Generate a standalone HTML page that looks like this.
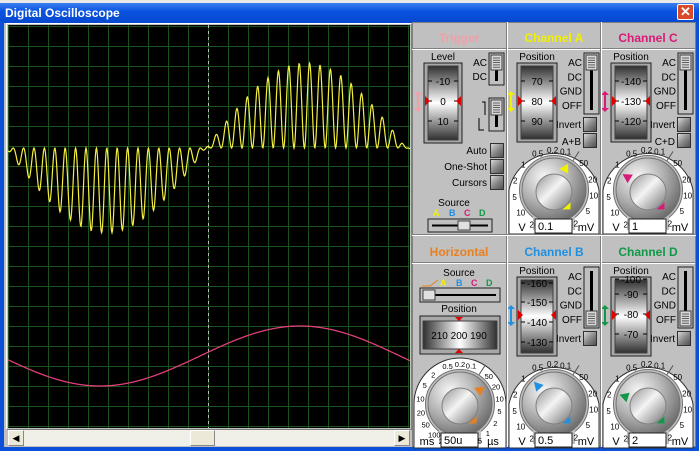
<!DOCTYPE html>
<html><head><meta charset="utf-8"><style>
*{margin:0;padding:0;box-sizing:border-box}
body{width:699px;height:451px;overflow:hidden;background:#c0c0c0;font-family:"Liberation Sans",Arial,sans-serif;position:relative}
.a{position:absolute}
.ttl{position:absolute;font-size:12px;font-weight:bold;text-align:center;width:94px;left:0;top:9px}
.btn{position:absolute;width:14px;height:15px;border:1px solid #303030;background:linear-gradient(135deg,#d8d8d8,#8a8a8a 50%,#505050)}
.col{position:absolute;width:94px;height:212px}
</style></head><body>
<div class="a" style="left:0;top:0;width:699px;height:3px;background:#e8e8e8"></div>
<div class="a" style="left:0;top:3px;width:699px;height:20px;background:linear-gradient(#3a80f0,#0a54e0 40%,#0848d0)"></div>
<div class="a" style="left:5px;top:6px;color:#fff;font-weight:bold;font-size:12px">Digital Oscilloscope</div>
<div class="a" style="left:677px;top:4px;width:17px;height:16px;background:#d84a2a;border:1px solid #fff;border-radius:2px;color:#fff;font-size:13px;font-weight:bold;text-align:center;line-height:14px">✕</div>
<div class="a" style="left:0;top:22px;width:4px;height:429px;background:#0a50d8"></div>
<div class="a" style="left:696px;top:22px;width:3px;height:429px;background:#0a50d8"></div>
<div class="a" style="left:0;top:447px;width:699px;height:4px;background:#0a50d8"></div>
<div class="a" style="left:6px;top:23px;width:406px;height:407px;border:1px solid #fff;border-right-color:#808080;border-bottom-color:#808080"></div>
<svg class="a" style="left:8px;top:25px" width="402" height="403" id="scr"></svg>
<div class="a" style="left:8px;top:430px;width:402px;height:16px;background:#f0efe8"></div>
<div class="a" style="left:8px;top:430px;width:16px;height:16px;background:#ece9d8;border:1px solid #fff;border-right-color:#888;border-bottom-color:#888;font-size:9px;text-align:center;line-height:14px">◀</div>
<div class="a" style="left:394px;top:430px;width:16px;height:16px;background:#ece9d8;border:1px solid #fff;border-right-color:#888;border-bottom-color:#888;font-size:9px;text-align:center;line-height:14px">▶</div>
<div class="a" style="left:190px;top:430px;width:25px;height:16px;background:#ece9d8;border:1px solid #fff;border-right-color:#888;border-bottom-color:#888"></div>
<div class="a" style="left:412px;top:22px;width:284px;height:425px;background:#c0c0c0;border:1px solid #808080"></div>
<div id="cols"></div>
<script>
(function(){
var s='<rect width="402" height="403" fill="#000"/>';
for(var i=0;i<=20;i++){var x=i*20+0.5;s+='<line x1="'+x+'" y1="0" x2="'+x+'" y2="403" stroke="#1c521c"/>';}
for(var j=0;j<=20;j++){var y=j*20+1.5;s+='<line x1="0" y1="'+y+'" x2="402" y2="'+y+'" stroke="#1c521c"/>';}
s+='<line x1="200.5" y1="0" x2="200.5" y2="403" stroke="#bbb" stroke-dasharray="3,3"/>';
var p='',q='';
for(var x=0;x<=402;x+=0.5){var X=x+8;var sv=Math.sin(2*Math.PI*(X-206)/400);var f=Math.cos(2*Math.PI*(X-8)/10.4);
var y=148-85*sv*(0.5+0.5*f)-25;p+=(x?'L':'M')+x+' '+y.toFixed(1);
var y2=356-30*Math.sin(2*Math.PI*(X-200)/400)-25;q+=(x?'L':'M')+x+' '+y2.toFixed(1);}
s+='<path d="'+q+'" fill="none" stroke="#e0407a" stroke-width="1.3"/>';
s+='<path d="'+p+'" fill="none" stroke="#f4f040" stroke-width="1.2"/>';
document.getElementById('scr').innerHTML=s;
})();
function tri(x,y,dir,c,sz){sz=sz||5;var pts;
if(dir=='r')pts=[x,y-sz,x+sz,y,x,y+sz];else if(dir=='l')pts=[x,y-sz,x-sz,y,x,y+sz];else if(dir=='d')pts=[x-sz,y,x+sz,y,x,y+sz];else pts=[x-sz,y,x+sz,y,x,y-sz];
return '<polygon points="'+pts.join(',')+'" fill="'+c+'"/>';}
function varrow(x,y1,y2,c){return '<line x1="'+x+'" y1="'+(y1+4)+'" x2="'+x+'" y2="'+(y2-4)+'" stroke="'+c+'" stroke-width="2"/>'+tri(x,y1+5,'u',c,4)+tri(x,y2-5,'d',c,4);}
function vdrum(x,y,w,h,vals,ty){
var s='<rect x="'+x+'" y="'+y+'" width="'+w+'" height="'+h+'" fill="#a8a8a8" stroke="#202020"/>';
s+='<rect x="'+(x+4)+'" y="'+(y+3)+'" width="'+(w-8)+'" height="'+(h-6)+'" fill="url(#vg)" stroke="#404040"/>';
for(var i=0;i<vals.length;i++){var yy=vals[i][1];s+='<text x="'+(x+w/2)+'" y="'+(yy+4)+'" font-size="10" text-anchor="middle" fill="#000">'+vals[i][0]+'</text>';
s+='<line x1="'+(x+4)+'" y1="'+yy+'" x2="'+(x+8)+'" y2="'+yy+'" stroke="#000"/><line x1="'+(x+w-8)+'" y1="'+yy+'" x2="'+(x+w-4)+'" y2="'+yy+'" stroke="#000"/>';}
s+=tri(x+1,ty,'r','#e00000',5)+tri(x+w-1,ty,'l','#e00000',5);return s;}
function vslider(x,y,h,bottom){var s='<rect x="'+x+'" y="'+y+'" width="15" height="'+h+'" fill="#c0c0c0" stroke="#202020"/>';
s+='<rect x="'+(x+6)+'" y="'+(y+4)+'" width="3" height="'+(h-8)+'" fill="#000"/>';
var ty=bottom?y+h-17:y+2;s+='<rect x="'+(x+2)+'" y="'+ty+'" width="11" height="15" fill="#d8d8d8" stroke="#404040"/>';
for(var i=0;i<5;i++)s+='<line x1="'+(x+4)+'" y1="'+(ty+3+i*2.3)+'" x2="'+(x+11)+'" y2="'+(ty+3+i*2.3)+'" stroke="#404040" stroke-width=".8"/>';return s;}
function dial(cx,cy,col,ang,L,R,uL,uR,val,fs){fs=fs||8;
var s='<path d="M2 212 L2 '+cy+' A46 46 0 0 1 '+(2*cx-2)+' '+cy+' L'+(2*cx-2)+' 212 Z" fill="#fff" stroke="#303030"/>';
s+='<circle cx="'+cx+'" cy="'+cy+'" r="34.5" fill="#c0c0c0" stroke="#707070"/>';
s+='<rect x="'+(cx-21)+'" y="'+cy+'" width="42" height="40" fill="#c0c0c0"/>';
var a=33*Math.PI/180;s+='<line x1="'+(cx+35*Math.sin(a))+'" y1="'+(cy-35*Math.cos(a))+'" x2="'+(cx+46*Math.sin(a))+'" y2="'+(cy-46*Math.cos(a))+'" stroke="#555"/>';
function lab(t,deg,r){var a=deg*Math.PI/180;return '<text x="'+(cx+r*Math.sin(a)).toFixed(1)+'" y="'+(cy-r*Math.cos(a)+3).toFixed(1)+'" font-size="'+fs+'" text-anchor="middle">'+t+'</text>';}
for(var i=0;i<L.length;i++)s+=lab(L[i][0],L[i][1],40);
for(var i=0;i<R.length;i++)s+=lab(R[i][0],R[i][1],40);
s+='<circle cx="'+cx+'" cy="'+cy+'" r="32" fill="url(#kg)" stroke="#707070"/>';
s+='<circle cx="'+cx+'" cy="'+(cy+2)+'" r="18" fill="url(#ig)" stroke="#808080"/>';
var b=ang*Math.PI/180,px=cx+24*Math.sin(b),py=cy-24*Math.cos(b);
s+='<polygon points="'+(px+6*Math.sin(b))+','+(py-6*Math.cos(b))+' '+(px-5*Math.cos(b)-3*Math.sin(b))+','+(py-5*Math.sin(b)+3*Math.cos(b))+' '+(px+5*Math.cos(b)-3*Math.sin(b))+','+(py+5*Math.sin(b)+3*Math.cos(b))+'" fill="'+col+'"/>';
var c=145*Math.PI/180,qx=cx+20*Math.sin(c),qy=cy-20*Math.cos(c);
s+='<polygon points="'+(qx+5)+','+(qy-4)+' '+(qx+5)+','+(qy+3)+' '+(qx-3)+','+(qy+3)+'" fill="'+col+'"/>';
s+='<text x="15" y="209" font-size="11" text-anchor="middle">'+uL+'</text><text x="'+(2*cx-15)+'" y="209" font-size="11" text-anchor="middle">'+uR+'</text>';
s+='<rect x="'+(cx-19)+'" y="197" width="37" height="14" fill="#fff" stroke="#202020"/><text x="'+(cx-16)+'" y="208" font-size="11">'+val+'</text>';
return s;}
var defs='<defs><linearGradient id="vg" x1="0" y1="0" x2="0" y2="1"><stop offset="0" stop-color="#303030"/><stop offset=".5" stop-color="#fff"/><stop offset="1" stop-color="#303030"/></linearGradient>'+
'<linearGradient id="hg" x1="0" y1="0" x2="1" y2="0"><stop offset="0" stop-color="#303030"/><stop offset=".5" stop-color="#fff"/><stop offset="1" stop-color="#303030"/></linearGradient>'+
'<radialGradient id="kg" cx=".35" cy=".3" r=".8"><stop offset="0" stop-color="#f8f8f8"/><stop offset=".5" stop-color="#b0b0b0"/><stop offset="1" stop-color="#606060"/></radialGradient>'+
'<linearGradient id="ig" x1="0" y1="0" x2="1" y2="1"><stop offset="0" stop-color="#909090"/><stop offset=".45" stop-color="#f4f4f4"/><stop offset="1" stop-color="#707070"/></linearGradient></defs>';
function frame(){return '<line x1="0" y1="26.5" x2="94" y2="26.5" stroke="#808080"/><line x1="0" y1="27.5" x2="94" y2="27.5" stroke="#fff"/>';}
var L=[['0.5',-24],['1',-50],['2',-76],['5',-100],['10',-124],['20',-150]],R=[['0.2',-2],['0.1',17],['50',48],['20',75],['10',98],['5',122],['2',147]];
var html='';
function colDiv(x,y,svg,extra){html+='<div class="col" style="left:'+x+'px;top:'+y+'px"><svg width="94" height="213" style="position:absolute;left:0;top:0;font-family:Liberation Sans,Arial,sans-serif">'+defs+frame()+svg+'</svg>'+extra+'</div>';}
function chan(x,y,name,col,vals,bottom,extra,ang,val){
var s=vdrum(10,41,40,79,vals,79)+varrow(4,68,91,col)+vslider(77,31,61,bottom)+dial(47,168,col,ang,L,R,'V','mV',val);
s+='<text x="30" y="38" font-size="10" text-anchor="middle">Position</text>';
var ls=['AC','DC','GND','OFF'];for(var i=0;i<4;i++)s+='<text x="75" y="'+(44+i*14.3)+'" font-size="10" text-anchor="end">'+ls[i]+'</text>';
s+='<text x="74" y="106" font-size="10" text-anchor="end">Invert</text>';
if(extra)s+='<text x="74" y="123" font-size="10" text-anchor="end">'+extra+'</text>';
var ex='<div class="ttl" style="color:'+col+'">'+name+'</div><div class="btn" style="left:76px;top:95px"></div>'+(extra?'<div class="btn" style="left:76px;top:111px"></div>':'');
colDiv(x,y,s,ex);}
chan(507,22,'Channel A','#f0f000',[['70',59],['80',79],['90',99]],false,'A+B',28,'0.1');
chan(601,22,'Channel C','#d81a78',[['-140',59],['-130',79],['-120',99]],false,'C+D',-58,'1');
chan(507,236,'Channel B','#2090e0',[['-160',47],['-150',66],['-140',86],['-130',106]],true,null,-42,'0.5');
chan(601,236,'Channel D','#109848',[['-100',43],['-90',58],['-80',78],['-70',98]],true,null,-72,'2');
(function(){var s=vdrum(12,41,38,80,[['-10',59],['0',79],['10',99]],79)+varrow(6,68,91,'#f0a0a8');
s+='<text x="31" y="38" font-size="10" text-anchor="middle">Level</text>';
s+='<text x="75" y="44" font-size="10" text-anchor="end">AC</text><text x="75" y="58" font-size="10" text-anchor="end">DC</text>';
s+=vslider(77,31,32,false)+vslider(77,76,33,false);
s+='<path d="M70 80 L73 80 L73 93 M67 96 L67 108 L72 108" stroke="#000" fill="none"/>';
s+='<text x="75" y="132" font-size="10" text-anchor="end">Auto</text><text x="75" y="148" font-size="10" text-anchor="end">One-Shot</text><text x="75" y="164" font-size="10" text-anchor="end">Cursors</text>';
s+='<text x="42" y="184" font-size="10" text-anchor="middle">Source</text>';
s+='<text x="21" y="194" font-size="9" fill="#f0f000" font-weight="bold">A</text><text x="37" y="194" font-size="9" fill="#2090e0" font-weight="bold">B</text><text x="52" y="194" font-size="9" fill="#d81a78" font-weight="bold">C</text><text x="67" y="194" font-size="9" fill="#109848" font-weight="bold">D</text>';
s+='<rect x="16" y="197" width="64" height="13" fill="#c0c0c0" stroke="#202020"/><line x1="20" y1="203.5" x2="76" y2="203.5" stroke="#000" stroke-width="2"/><rect x="46" y="199" width="12" height="9" fill="#e0e0e0" stroke="#404040"/>';
var ex='<div class="ttl" style="color:#f0a0a8">Trigger</div><div class="btn" style="left:78px;top:121px"></div><div class="btn" style="left:78px;top:137px"></div><div class="btn" style="left:78px;top:153px"></div>';
colDiv(412,22,s,ex);})();
(function(){var s='<text x="47" y="40" font-size="10" text-anchor="middle">Source</text>';
s+='<path d="M10 50 L18 50 L26 44" stroke="#e88020" fill="none"/><text x="28" y="50" font-size="9" fill="#f0f000" font-weight="bold">A</text><text x="44" y="50" font-size="9" fill="#2090e0" font-weight="bold">B</text><text x="59" y="50" font-size="9" fill="#d81a78" font-weight="bold">C</text><text x="74" y="50" font-size="9" fill="#109848" font-weight="bold">D</text>';
s+='<rect x="8" y="52" width="80" height="14" fill="#c0c0c0" stroke="#202020"/><line x1="12" y1="59" x2="84" y2="59" stroke="#000" stroke-width="2"/><rect x="11" y="54" width="12" height="10" fill="#e0e0e0" stroke="#404040"/>';
s+='<text x="47" y="76" font-size="10" text-anchor="middle">Position</text>';
s+='<rect x="8" y="80" width="80" height="38" fill="#a8a8a8" stroke="#202020"/><rect x="11" y="85" width="74" height="28" fill="url(#hg)" stroke="#404040"/>';
s+='<text x="47" y="103" font-size="10" text-anchor="middle">210  200  190</text>'+tri(47,81,'d','#e00000',4)+tri(47,117,'u','#e00000',4);
var HL=[['0.5',-18],['2',-42],['5',-62],['10',-82],['20',-102],['50',-121],['100',-140],['200',-158]],HR=[['0.2',0],['0.1',16],['50',46],['20',64],['10',82],['5',100],['2',118],['1',136],['0.5',155]];
s+=dial(48,168,'#e88020',55,HL,HR,'ms','µs','50u',7.5);
colDiv(412,236,s,'<div class="ttl" style="color:#e88020">Horizontal</div>');})();
document.getElementById('cols').innerHTML=html;
</script>
<div class="a" style="left:506px;top:22px;width:1px;height:425px;background:#808080"></div>
<div class="a" style="left:507px;top:22px;width:1px;height:425px;background:#fff"></div>
<div class="a" style="left:600px;top:22px;width:1px;height:425px;background:#808080"></div>
<div class="a" style="left:601px;top:22px;width:1px;height:425px;background:#fff"></div>
<div class="a" style="left:412px;top:234px;width:284px;height:1px;background:#808080"></div>
<div class="a" style="left:412px;top:235px;width:284px;height:1px;background:#fff"></div>
</body></html>
